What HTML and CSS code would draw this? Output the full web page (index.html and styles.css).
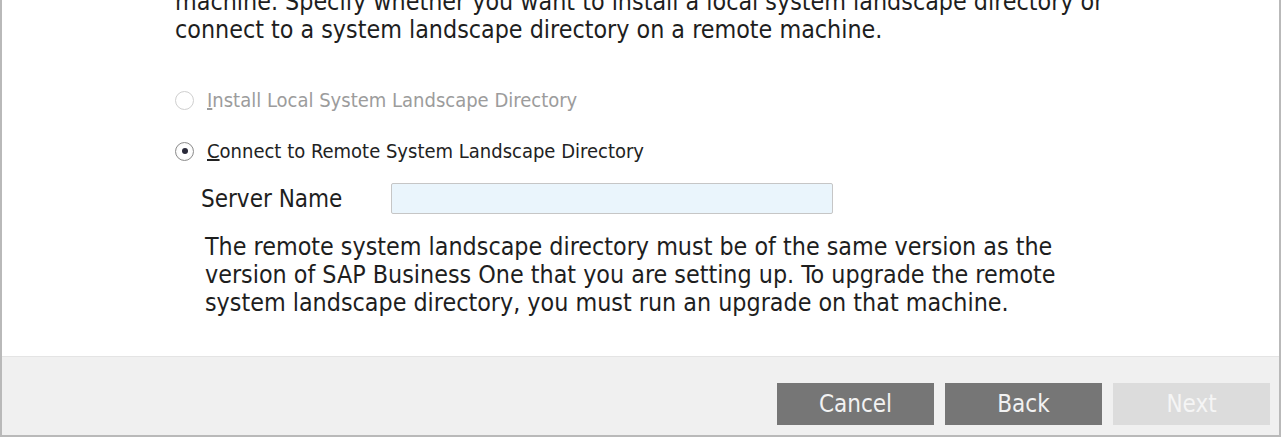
FILE: index.html
```html
<!DOCTYPE html>
<html lang="en">
<head>
<meta charset="utf-8">
<title>System Landscape Directory</title>
<link rel="stylesheet" href="styles.css">
</head>
<body>
<div class="dialog">
  <div class="content">
    <p class="intro">machine. Specify whether you want to install a local system landscape directory or connect to a system landscape directory on a remote machine.</p>
    <div class="options">
      <label class="option disabled">
        <span class="radio"></span>
        <span class="label-text"><u>I</u>nstall Local System Landscape Directory</span>
      </label>
      <label class="option">
        <span class="radio checked"></span>
        <span class="label-text"><u>C</u>onnect to Remote System Landscape Directory</span>
      </label>
    </div>
    <div class="server-row">
      <span class="server-label">Server Name</span>
      <span class="server-input"></span>
    </div>
    <p class="note">The remote system landscape directory must be of the same version as the version of SAP Business One that you are setting up. To upgrade the remote system landscape directory, you must run an upgrade on that machine.</p>
  </div>
  <div class="footer">
    <button class="btn">Cancel</button>
    <button class="btn">Back</button>
    <button class="btn btn-disabled">Next</button>
  </div>
</div>
</body>
</html>
```

FILE: styles.css
```css
html, body {
  margin: 0;
  padding: 0;
  background: #ffffff;
  overflow: hidden;
}

body {
  font-family: "DejaVu Sans Condensed", "DejaVu Sans", sans-serif;
  color: #1c1c1c;
}

.dialog {
  width: 1281px;
  height: 437px;
  box-sizing: border-box;
  border: 2px solid #b9b9b9;
  border-top: none;
  display: flex;
  flex-direction: column;
  background: #ffffff;
}

.content {
  flex: 1;
  padding-left: 173px;
  display: flex;
  flex-direction: column;
}

.intro {
  margin: -12px 0 0 0;
  width: 975px;
  font-size: 24.8px;
  line-height: 28px;
  color: #1e1e1e;
}

.options {
  margin-top: 41px;
  display: flex;
  flex-direction: column;
  gap: 21px;
}

.option {
  display: flex;
  align-items: center;
  height: 30px;
  gap: 13px;
  font-size: 20px;
  color: #222222;
}

.option.disabled {
  color: #9c9c9c;
}

.radio {
  width: 19px;
  height: 19px;
  box-sizing: border-box;
  border-radius: 50%;
  border: 1px solid #8c8c8c;
  background: radial-gradient(circle, #ffffff 50%, #efefef 100%);
  display: flex;
  align-items: center;
  justify-content: center;
}

.option.disabled .radio {
  border-color: #cfcfcf;
  background: #ffffff;
}

.radio.checked::after {
  content: "";
  width: 6px;
  height: 6px;
  border-radius: 50%;
  background: #2a2a3a;
}

.server-row {
  margin-top: 17px;
  padding-left: 26px;
  display: flex;
  align-items: center;
  height: 31px;
}

.server-label {
  width: 190px;
  font-size: 24px;
  color: #1e1e1e;
}

.server-input {
  width: 442px;
  height: 31px;
  box-sizing: border-box;
  border: 1px solid #c6c6c6;
  border-radius: 2px;
  background: #eaf5fc;
}

.note {
  margin: 19px 0 0 30px;
  width: 915px;
  font-size: 24.8px;
  line-height: 28px;
  color: #1e1e1e;
}

.footer {
  height: 79px;
  box-sizing: border-box;
  background: #f0f0f0;
  border-top: 1px solid #e4e4e4;
  display: flex;
  justify-content: flex-end;
  align-items: flex-start;
  gap: 11px;
  padding: 26px 9px 0 0;
}

.btn {
  width: 157px;
  height: 42px;
  border: none;
  border-radius: 0;
  background: #767676;
  color: #f2f2f2;
  font-family: "DejaVu Sans Condensed", "DejaVu Sans", sans-serif;
  font-size: 24px;
  padding: 0;
}

.btn-disabled {
  background: #dcdcdc;
  color: #f5f5f5;
}
```
